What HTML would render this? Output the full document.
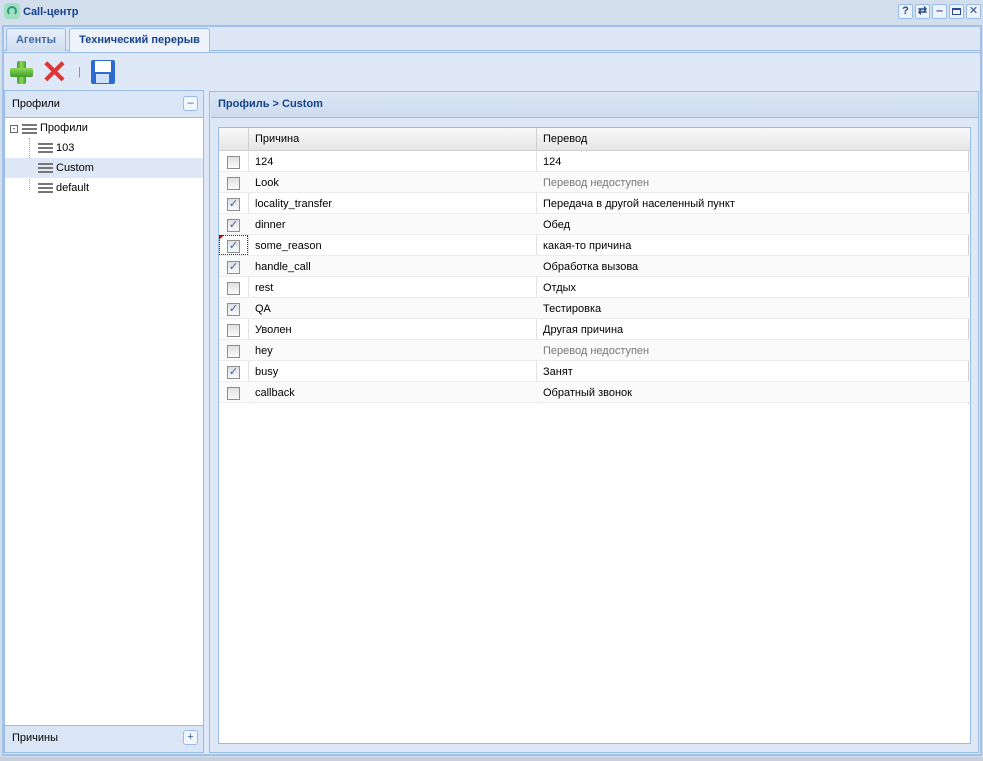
<!DOCTYPE html>
<html><head><meta charset="utf-8"><style>
*{box-sizing:border-box;margin:0;padding:0}
body{width:983px;height:761px;background:#d3deed;font-family:"Liberation Sans",sans-serif;font-size:11px;position:relative;overflow:hidden}
.a{position:absolute}
.btn{position:absolute;top:4px;width:15px;height:15px;border:1px solid #99bbe8;background:#eef3fb;border-radius:2px;color:#2a4a8a;font-size:11px;font-weight:bold;text-align:center;line-height:13px}
.row{position:absolute;left:0;width:751px;height:21px;border-bottom:1px solid #ededed}
.row div{position:absolute;top:1px;height:21px;line-height:20px;padding-left:6px;color:#000}
.cb{position:absolute;left:8px;top:5px;width:13px;height:13px;border:1px solid #8e8e8e;background:linear-gradient(#e0e0e0,#fafafa);color:#3a5bb0;font-size:11px;line-height:11px;text-align:center}
.ti{position:absolute;width:15px;height:10px;border-top:2px solid #777;border-bottom:2px solid #777}
.ti:after{content:"";position:absolute;left:0;right:0;top:2px;border-top:2px solid #777}
</style></head><body>
<div class="a" style="left:4px;top:3px;width:16px;height:16px;background:#9fe0c0;border-radius:4px"></div>
<div class="a" style="left:7px;top:6px;width:10px;height:10px;border:2px solid #2a9a7a;border-radius:50%;border-bottom-color:transparent"></div>
<div class="a" style="left:23px;top:6px;font-weight:bold;color:#15428b">Call-центр</div>
<div class="btn" style="left:898px">?</div>
<div class="btn" style="left:915px">⇄</div>
<div class="btn" style="left:932px">‒</div>
<div class="btn" style="left:949px"><div style="margin:3px 2px;height:7px;border:1px solid #2a4a8a;border-top-width:2px"></div></div>
<div class="btn" style="left:966px;font-weight:normal">✕</div>

<div class="a" style="left:2px;top:25px;width:980px;height:731px;border:2px solid #a3c0e8;background:#dfe8f6"></div>
<div class="a" style="left:4px;top:27px;width:976px;height:24px;background:#dce6f4;border-bottom:1px solid #99bbe8"></div>
<div class="a" style="left:6px;top:28px;width:60px;height:23px;border:1px solid #99bbe8;border-bottom:none;border-radius:3px 3px 0 0;background:linear-gradient(#e6eef9,#d1def0);color:#416aa3;font-weight:bold;text-align:center;line-height:23px">Агенты</div>
<div class="a" style="left:69px;top:28px;width:141px;height:24px;border:1px solid #99bbe8;border-bottom:none;border-radius:3px 3px 0 0;background:#eef3fb;color:#15428b;font-weight:bold;text-align:center;line-height:23px">Технический перерыв</div>
<div class="a" style="left:4px;top:52px;width:976px;height:38px;background:#dfe8f6;border-top:1px solid #99bbe8"></div>
<div class="a" style="left:17px;top:61px;width:9px;height:23px;background:linear-gradient(90deg,#3d9d2a,#8fd85a,#3d9d2a);border-radius:2px"></div>
<div class="a" style="left:10px;top:68px;width:23px;height:9px;background:linear-gradient(#8fd85a,#3d9d2a);border-radius:2px"></div>
<div class="a" style="left:41px;top:59px;font-size:32px;line-height:26px;color:#e03535;font-weight:bold">✕</div>
<div class="a" style="left:78px;top:66px;color:#888">|</div>
<div class="a" style="left:91px;top:60px;width:24px;height:24px;background:#2c6cd0;border-radius:2px"></div>
<div class="a" style="left:95px;top:61px;width:16px;height:11px;background:#fff"></div>
<div class="a" style="left:96px;top:74px;width:13px;height:9px;background:#cfe0f8"></div>

<div class="a" style="left:4px;top:90px;width:200px;height:663px;border:1px solid #99bbe8;background:#fff"></div>
<div class="a" style="left:5px;top:91px;width:198px;height:27px;background:#dae6f5;border-bottom:1px solid #99bbe8"></div>
<div class="a" style="left:12px;top:98px;color:#000">Профили</div>
<div class="a" style="left:183px;top:96px;width:15px;height:15px;border:1px solid #99bbe8;border-radius:3px;background:#f2f6fc;text-align:center;line-height:12px;color:#3a5f9a">–</div>
<div class="a" style="left:10px;top:125px;width:8px;height:8px;border:1px solid #666;background:#fff;font-size:8px;line-height:5px;text-align:center">-</div>
<div class="ti" style="left:22px;top:124px"></div>
<div class="a" style="left:40px;top:122px">Профили</div>
<div class="a" style="left:29px;top:138px;height:52px;border-left:1px dotted #aaa"></div>
<div class="ti" style="left:38px;top:143px"></div><div class="a" style="left:56px;top:142px">103</div>
<div class="a" style="left:5px;top:158px;width:198px;height:20px;background:#dfe8f6"></div>
<div class="ti" style="left:38px;top:163px"></div><div class="a" style="left:56px;top:162px">Custom</div>
<div class="ti" style="left:38px;top:183px"></div><div class="a" style="left:56px;top:182px">default</div>
<div class="a" style="left:5px;top:725px;width:198px;height:27px;background:#dae6f5;border-top:1px solid #99bbe8"></div>
<div class="a" style="left:12px;top:732px">Причины</div>
<div class="a" style="left:183px;top:730px;width:15px;height:15px;border:1px solid #99bbe8;border-radius:3px;background:#f2f6fc;text-align:center;line-height:12px;color:#3a5f9a">+</div>

<div class="a" style="left:209px;top:91px;width:770px;height:662px;border:1px solid #99bbe8;background:#dfe8f6"></div>
<div class="a" style="left:211px;top:92px;width:767px;height:26px;background:linear-gradient(#dae6f4,#cfdcef);border-bottom:1px solid #99bbe8"></div>
<div class="a" style="left:218px;top:98px;font-weight:bold;color:#15428b">Профиль &gt; Custom</div>
<div class="a" style="left:218px;top:127px;width:753px;height:617px;border:1px solid #99bbe8;background:#fff">
 <div class="a" style="left:0;top:0;width:751px;height:23px;background:linear-gradient(#f9f9f9,#e5e5e5);border-bottom:1px solid #d0d0d0"></div>
 <div class="a" style="left:29px;top:0;height:23px;border-left:1px solid #d0d0d0"></div>
 <div class="a" style="left:317px;top:0;height:23px;border-left:1px solid #d0d0d0"></div>
 <div class="a" style="left:36px;top:5px">Причина</div>
 <div class="a" style="left:324px;top:5px">Перевод</div>
 <div class="a" style="left:29px;top:23px;height:253px;border-left:1px solid #e3e3e3"></div>
 <div class="a" style="left:317px;top:23px;height:253px;border-left:1px solid #e3e3e3"></div>
 <div class="a" style="left:749px;top:23px;height:253px;border-left:1px solid #d0d0d0"></div>
 <div class="row" style="top:23px"><span class="cb"></span><div style="left:30px">124</div><div style="left:318px">124</div></div>
 <div class="row" style="top:44px;background:#fafafa"><span class="cb"></span><div style="left:30px">Look</div><div style="left:318px;color:#777">Перевод недоступен</div></div>
 <div class="row" style="top:65px"><span class="cb">✓</span><div style="left:30px">locality_transfer</div><div style="left:318px">Передача в другой населенный пункт</div></div>
 <div class="row" style="top:86px;background:#fafafa"><span class="cb">✓</span><div style="left:30px">dinner</div><div style="left:318px">Обед</div></div>
 <div class="row" style="top:107px"><span class="a" style="left:0;top:0;width:29px;height:20px;border:1px dotted #333"></span><span class="a" style="left:0;top:0;border-top:5px solid #c00;border-right:5px solid transparent"></span><span class="cb">✓</span><div style="left:30px">some_reason</div><div style="left:318px">какая-то причина</div></div>
 <div class="row" style="top:128px;background:#fafafa"><span class="cb">✓</span><div style="left:30px">handle_call</div><div style="left:318px">Обработка вызова</div></div>
 <div class="row" style="top:149px"><span class="cb"></span><div style="left:30px">rest</div><div style="left:318px">Отдых</div></div>
 <div class="row" style="top:170px;background:#fafafa"><span class="cb">✓</span><div style="left:30px">QA</div><div style="left:318px">Тестировка</div></div>
 <div class="row" style="top:191px"><span class="cb"></span><div style="left:30px">Уволен</div><div style="left:318px">Другая причина</div></div>
 <div class="row" style="top:212px;background:#fafafa"><span class="cb"></span><div style="left:30px">hey</div><div style="left:318px;color:#777">Перевод недоступен</div></div>
 <div class="row" style="top:233px"><span class="cb">✓</span><div style="left:30px">busy</div><div style="left:318px">Занят</div></div>
 <div class="row" style="top:254px;background:#fafafa"><span class="cb"></span><div style="left:30px">callback</div><div style="left:318px">Обратный звонок</div></div>
</div>
<div class="a" style="left:0;top:757px;width:983px;height:4px;background:#c8cfdc"></div>
</body></html>
